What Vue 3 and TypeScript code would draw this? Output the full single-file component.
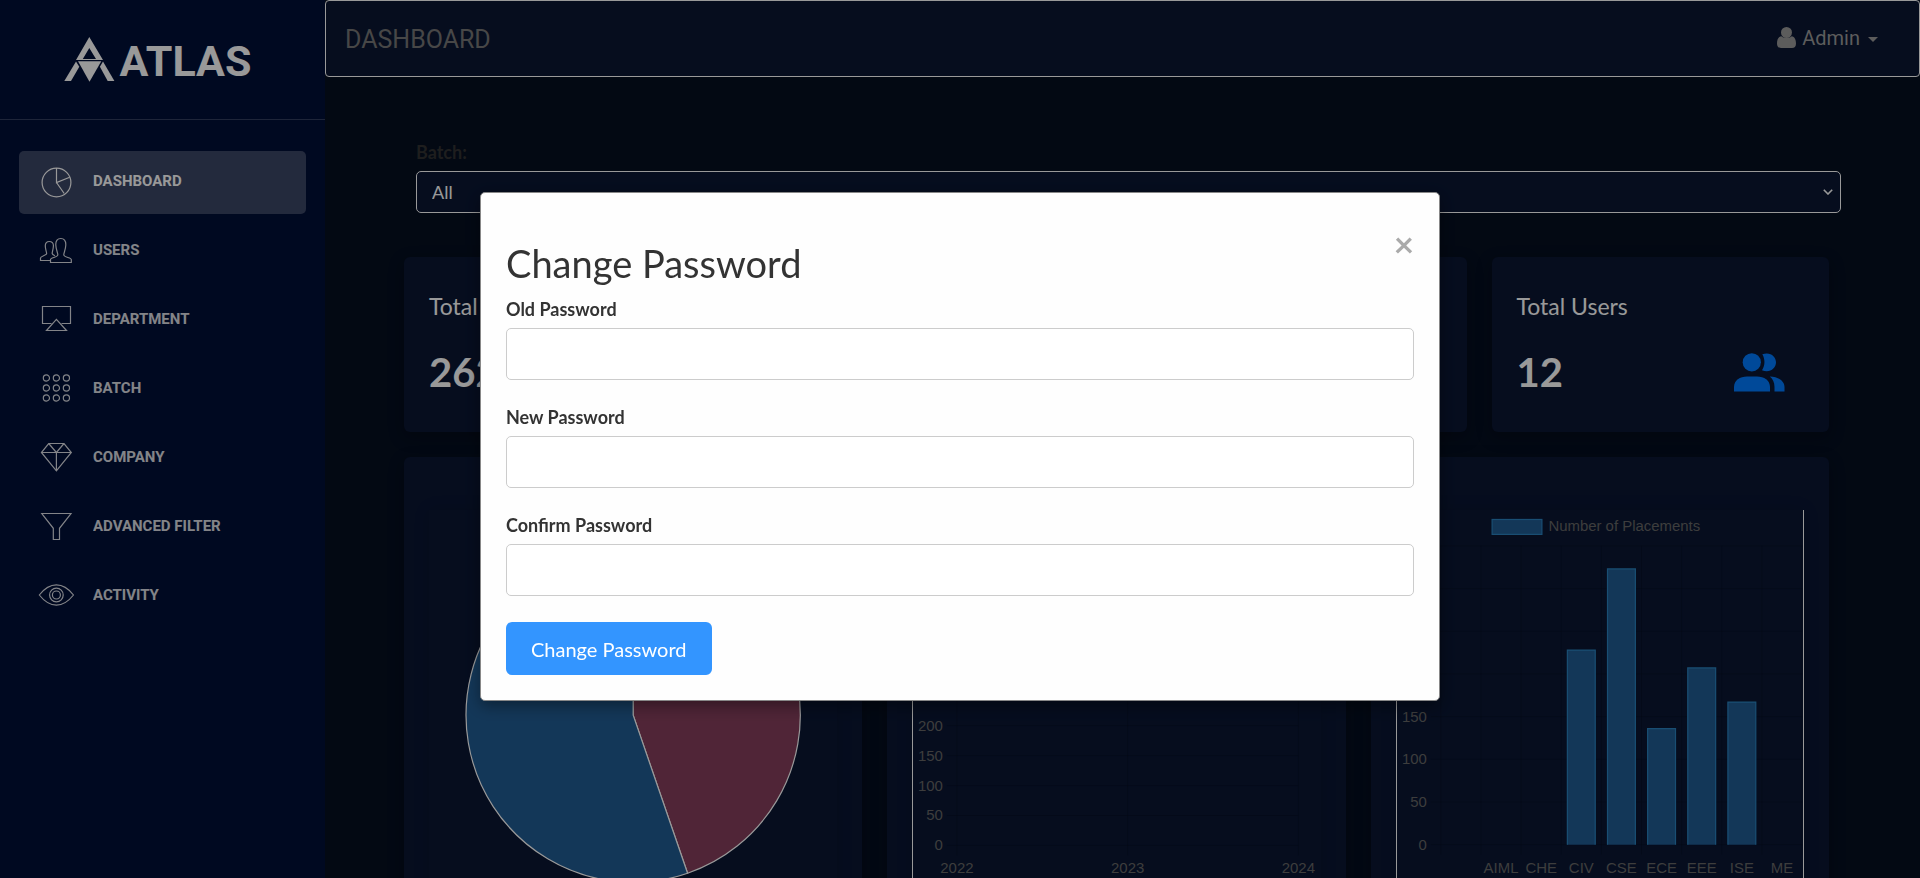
<script setup lang="ts">
import { ref } from 'vue'

interface NavItem {
  label: string
  paths: string[]
  active?: boolean
}

interface Stat {
  title: string
  value: number
}

const ring = (cx: number, cy: number, r: number): string =>
  `M${cx - r} ${cy}a${r} ${r} 0 1 0 ${2 * r} 0a${r} ${r} 0 1 0 ${-2 * r} 0z`

const navItems: NavItem[] = [
  {
    label: 'Dashboard',
    active: true,
    paths: [ring(18.5, 19.5, 14.4), 'M18.5 5V19.5L31.7 14.3M18.5 19.5L26.2 30.5'],
  },
  {
    label: 'Users',
    paths: [
      'M12.5 30.5V27.5C12.5 25.5 19.5 25.4 19.8 23C20 21 18 18 17.8 13C17.6 8.5 19.5 6.5 22.8 6.5C26 6.5 28 8.5 27.8 13C27.6 18 25.6 21 25.8 23C26.1 25.4 33.3 25.5 33.3 27.5V30.5Z',
      'M12.5 28.5H2.5V26C2.5 24 8 23.6 8.6 21.8C8.8 20 7.4 18 7.3 14C7.2 11 8.8 9.5 11.3 9.5C13.8 9.5 15.6 11 15.4 14C15.3 18 14 20 14.2 21.5C14.5 22.6 15.5 23.2 17 23.8',
    ],
  },
  {
    label: 'Department',
    paths: ['M13.5 22.5H4.5V5.5H32.5V22.5H23.5', 'M18.4 18.3L8.5 29.5H28.5Z'],
  },
  {
    label: 'Batch',
    paths: [8, 18, 28].flatMap((y) => [8.4, 18.4, 28.4].map((x) => ring(x, y, 3.1))),
  },
  {
    label: 'Company',
    paths: ['M10.7 4.5H26L33.3 13.5L18.4 31.8L3.4 13.5Z', 'M3.4 13.5H33.3M10.7 4.5L18.4 13.5L26 4.5M18.4 13.5V31.8'],
  },
  {
    label: 'Advanced Filter',
    paths: ['M3.8 5.5H33L21.5 20.3V31.5H15.3V20.3Z'],
  },
  {
    label: 'Activity',
    paths: [
      'M1.3 18C12 4.6 24.8 4.6 35.5 18C24.8 31.5 12 31.5 1.3 18Z',
      ring(18.4, 18, 6.8),
      ring(18.4, 18, 4),
    ],
  },
]

const stats: Stat[] = [
  { title: 'Total Students', value: 262 },
  { title: 'Total Placements', value: 262 },
  { title: 'Total Companies', value: 12 },
  { title: 'Total Users', value: 12 },
]

const batch = ref('All')
const open = ref(true)
const oldPassword = ref('')
const newPassword = ref('')
const confirmPassword = ref('')

const zeroY = 336

const lineTicks = [0, 50, 100, 150, 200, 250, 300, 350, 400, 450].map((value) => ({
  value,
  y: zeroY - (value / 50) * 30,
}))
const years = ['2022', '2023', '2024'].map((label, i) => ({ label, x: 44 + i * 171 }))

const barTicks = [0, 50, 100, 150, 200, 250, 300, 350].map((value) => ({
  value,
  y: zeroY - value * 0.857,
}))
const columnLeft = 44
const columnWidth = 40.3
const departments = [
  { label: '', value: 0 },
  { label: 'AIML', value: 0 },
  { label: 'CHE', value: 0 },
  { label: 'CIV', value: 228 },
  { label: 'CSE', value: 323 },
  { label: 'ECE', value: 136 },
  { label: 'EEE', value: 207 },
  { label: 'ISE', value: 167 },
  { label: 'ME', value: 0 },
].map((d, i) => ({
  ...d,
  line: columnLeft + (i + 1) * columnWidth,
  center: columnLeft + (i + 0.5) * columnWidth,
  top: zeroY - d.value * 0.857,
}))
const bars = departments.filter((d) => d.value > 0)

const pieX = 204
const pieY = 205
const pieR = 167
const split = (161 * Math.PI) / 180
const splitX = pieX + pieR * Math.sin(split)
const splitY = pieY - pieR * Math.cos(split)
const redSlice = `M${pieX} ${pieY}V${pieY - pieR}A${pieR} ${pieR} 0 0 1 ${splitX} ${splitY}Z`
const blueSlice = `M${pieX} ${pieY}L${splitX} ${splitY}A${pieR} ${pieR} 0 1 1 ${pieX} ${pieY - pieR}Z`
</script>

<template>
  <div class="app">
    <aside class="sidebar">
      <a href="#" class="logo">
        <svg class="logo-mark" viewBox="0 0 51 47" aria-hidden="true">
          <path fill-rule="evenodd" d="M25.3 1L39 24H12ZM25.3 12L18.8 23H32Z" />
          <path d="M14 25.2H37.3L25.5 45.8Z" />
          <path d="M12 25.4L15.3 30.8L7 45H0.3Z" />
          <path d="M39 25.4L35.9 30.8L43.7 45H50.4Z" />
        </svg>
        <span>ATLAS</span>
      </a>
      <nav>
        <ul class="nav">
          <li v-for="item in navItems" :key="item.label">
            <a href="#" class="nav-link" :class="{ active: item.active }">
              <svg viewBox="0 0 37 37" aria-hidden="true">
                <path v-for="d in item.paths" :key="d" :d="d" />
              </svg>
              <span>{{ item.label }}</span>
            </a>
          </li>
        </ul>
      </nav>
    </aside>

    <div class="main">
      <header class="topbar">
        <h1>DASHBOARD</h1>
        <button type="button" class="account">
          <svg class="account-icon" viewBox="0 0 19 21" aria-hidden="true">
            <circle cx="9.5" cy="5.5" r="5.5" />
            <path d="M4.4 9.3C6 11.5 13 11.5 14.6 9.3C17.8 9.8 19 12.8 19 16.5C19 19.5 17.6 21 15 21H4C1.4 21 0 19.5 0 16.5C0 12.8 1.2 9.8 4.4 9.3Z" />
          </svg>
          <span>Admin</span>
          <span class="caret"></span>
        </button>
      </header>

      <main class="content">
        <div class="filter">
          <label for="batch">Batch:</label>
          <div class="select">
            <select id="batch" v-model="batch">
              <option>All</option>
            </select>
            <svg viewBox="0 0 10 6" aria-hidden="true">
              <path d="M0.8 0.8L5 5L9.2 0.8" />
            </svg>
          </div>
        </div>

        <section class="stats">
          <article v-for="stat in stats" :key="stat.title" class="card stat">
            <h2>{{ stat.title }}</h2>
            <div class="stat-row">
              <strong>{{ stat.value }}</strong>
              <svg class="people" viewBox="0 0 51 39" aria-hidden="true">
                <circle cx="17.8" cy="9.3" r="9.1" />
                <path d="M0 38.5V34C0 27.5 6 23.5 13 23.5H23C30 23.5 36 27.5 36 34V38.5Z" />
                <path d="M28.3 1.3C36 -1.8 42 3.5 42 9.3C42 15.5 35.5 20.5 28 17.2C31.2 12.5 31.2 6 28.3 1.3Z" />
                <path d="M35.8 23.5C44 23.5 50.5 28 50.5 34V38.5H40.5V34C40.5 29.5 38.8 26 35.8 23.5Z" />
              </svg>
            </div>
          </article>
        </section>

        <section class="charts">
          <article class="card chart">
            <svg class="plot" viewBox="0 0 408 408" role="img" aria-label="Placement share">
              <path class="slice red" :d="redSlice" />
              <path class="slice blue" :d="blueSlice" />
            </svg>
          </article>

          <article class="card chart">
            <svg class="plot framed-left" viewBox="0 0 408 408" role="img" aria-label="Placements by year">
              <g v-for="tick in lineTicks" :key="tick.value">
                <line class="grid" x1="34" x2="386" :y1="tick.y" :y2="tick.y" />
                <text class="tick end" x="30" :y="tick.y + 5">{{ tick.value }}</text>
              </g>
              <g v-for="year in years" :key="year.label">
                <line class="grid" :x1="year.x" :x2="year.x" y1="36" y2="346" />
                <text class="tick middle" :x="year.x" y="364">{{ year.label }}</text>
              </g>
            </svg>
          </article>

          <article class="card chart">
            <svg class="plot framed-left framed-right" viewBox="0 0 408 408" role="img" aria-label="Placements by department">
              <rect class="bar" x="95.5" y="9.5" width="50" height="15" />
              <text class="tick" x="152" y="21">Number of Placements</text>
              <g v-for="tick in barTicks" :key="tick.value">
                <line class="grid" x1="34" x2="407" :y1="tick.y" :y2="tick.y" />
                <text class="tick end" x="30" :y="tick.y + 5">{{ tick.value }}</text>
              </g>
              <line class="grid" :x1="columnLeft" :x2="columnLeft" y1="36" y2="346" />
              <g v-for="dept in departments" :key="dept.label">
                <line class="grid" :x1="dept.line" :x2="dept.line" y1="36" y2="346" />
                <text class="tick middle" :x="dept.center" y="364">{{ dept.label }}</text>
              </g>
              <path
                v-for="dept in bars"
                :key="dept.label"
                class="bar"
                :d="`M${dept.center - 14} ${zeroY}V${dept.top}H${dept.center + 14}V${zeroY}`"
              />
            </svg>
          </article>
        </section>
      </main>
    </div>

    <div v-if="open" class="backdrop">
      <div class="modal" role="dialog" aria-modal="true" aria-labelledby="modal-title">
        <div class="modal-head">
          <h2 id="modal-title">Change Password</h2>
          <button type="button" class="close" aria-label="Close" @click="open = false">×</button>
        </div>
        <form @submit.prevent>
          <div class="field">
            <label for="old-password">Old Password</label>
            <input id="old-password" v-model="oldPassword" type="password" />
          </div>
          <div class="field">
            <label for="new-password">New Password</label>
            <input id="new-password" v-model="newPassword" type="password" />
          </div>
          <div class="field">
            <label for="confirm-password">Confirm Password</label>
            <input id="confirm-password" v-model="confirmPassword" type="password" />
          </div>
          <button type="submit" class="submit">Change Password</button>
        </form>
      </div>
    </div>
  </div>
</template>

<style>
body {
  background: #050f21;
}
</style>

<style scoped>
.app,
.app * {
  box-sizing: border-box;
}

.app {
  display: flex;
  height: 100vh;
  overflow: hidden;
  background: #050f21;
  font-family: Lato, sans-serif;
  color: #333;
}

h1,
h2,
ul {
  margin: 0;
  padding: 0;
  font-weight: 400;
}

button {
  border: 0;
  background: none;
  cursor: pointer;
}

/* Sidebar */
.sidebar {
  flex: 0 0 325px;
  background: #000f38;
  font-family: Roboto, sans-serif;
}

.logo {
  display: flex;
  align-items: center;
  justify-content: center;
  gap: 5px;
  height: 120px;
  padding-right: 10px;
  border-bottom: 1px solid rgba(255, 255, 255, 0.2);
  color: #fff;
  font-size: 43px;
  font-weight: 700;
  line-height: 48px;
  text-decoration: none;
}

.logo span {
  padding-top: 3px;
}

.logo-mark {
  width: 51px;
  height: 47px;
  fill: currentColor;
}

.nav {
  display: flex;
  flex-direction: column;
  gap: 6px;
  padding: 31px 19px;
  list-style: none;
}

.nav-link {
  display: flex;
  align-items: center;
  gap: 18px;
  height: 63px;
  padding: 0 19px 2px;
  border-radius: 5px;
  color: #fff;
  font-size: 15px;
  font-weight: 700;
  line-height: 37px;
  text-decoration: none;
  text-transform: uppercase;
}

.nav-link > * {
  opacity: 0.86;
}

.nav-link.active {
  background: rgba(255, 255, 255, 0.23);
}

.nav-link.active > * {
  opacity: 1;
}

.nav-link svg {
  width: 37px;
  height: 37px;
  fill: none;
  stroke: currentColor;
  stroke-width: 1.2;
}

/* Main column */
.main {
  flex: 1;
  min-width: 0;
  overflow: auto;
  scrollbar-width: none;
}

.topbar {
  display: flex;
  align-items: center;
  justify-content: space-between;
  height: 77px;
  padding: 0 41px 0 19px;
  border: 1px solid #fff;
  border-radius: 4px;
  background: #0a1633;
  font-family: Roboto, sans-serif;
}

.topbar h1 {
  padding-top: 2px;
  color: #777;
  font-size: 25px;
  line-height: 30px;
}

.account {
  display: flex;
  align-items: center;
  gap: 6px;
  padding: 0 0 2px;
  color: #9a9a9a;
  font-family: inherit;
  font-size: 20px;
  line-height: 30px;
}

.account-icon {
  width: 19px;
  height: 21px;
  fill: currentColor;
}

.caret {
  margin: 4px 0 0 2px;
  border: 5px solid transparent;
  border-top-color: currentColor;
  border-bottom: 0;
}

.content {
  padding: 62px 79px 40px 91px;
}

.filter {
  display: flex;
  flex-direction: column;
  gap: 6px;
  margin-bottom: 44px;
}

.filter label {
  font-size: 18px;
  font-weight: 700;
  line-height: 26px;
}

.select {
  display: grid;
  align-items: center;
}

.select > * {
  grid-area: 1 / 1;
}

.select select {
  width: 100%;
  height: 42px;
  padding: 0 15px;
  appearance: none;
  border: 1px solid #fff;
  border-radius: 5px;
  background: #0a1633;
  color: #fff;
  font-family: inherit;
  font-size: 18px;
}

.select svg {
  justify-self: end;
  width: 10px;
  height: 6px;
  margin-right: 8px;
  fill: none;
  stroke: #fff;
  stroke-width: 1.6;
  pointer-events: none;
}

.stats,
.charts {
  display: grid;
  grid-template-columns: repeat(4, 1fr);
  gap: 25px;
  margin: 0 12px 0 -12px;
}

.charts {
  grid-template-columns: repeat(3, 1fr);
  margin-top: 25px;
}

.card {
  border-radius: 6px;
  background: #0a1633;
  box-shadow: 0 5px 16px rgba(0, 0, 0, 0.25);
}

.stat {
  height: 175px;
  padding: 35px 44px 0 25px;
  color: #fff;
}

.stat h2 {
  font-size: 23px;
  line-height: 28px;
}

.stat-row {
  display: flex;
  align-items: center;
  justify-content: space-between;
  margin-top: 28px;
}

.stat strong {
  font-size: 40px;
  line-height: 48px;
}

.people {
  width: 51px;
  height: 39px;
  fill: #007bff;
}

.chart {
  padding: 53px 25px 25px;
}

.plot {
  display: block;
  width: 100%;
  box-shadow: 0 0 16px rgba(0, 0, 0, 0.1);
}

.framed-left {
  border-left: 1px solid #fff;
}

.framed-right {
  border-right: 1px solid #fff;
}

.slice {
  stroke: #fff;
  stroke-width: 1.2;
}

.red {
  fill: #853e5c;
}

.blue {
  fill: #215c93;
}

.bar {
  fill: #215c93;
  stroke: #2a83c0;
  stroke-width: 1.2;
}

.grid {
  stroke: rgba(0, 0, 0, 0.15);
}

.tick {
  fill: #666;
  font-family: "Liberation Sans", Arial, sans-serif;
  font-size: 15px;
}

.end {
  text-anchor: end;
}

.middle {
  text-anchor: middle;
}

/* Dialog */
.backdrop {
  position: fixed;
  inset: 0;
  padding-top: 192px;
  background: rgba(0, 0, 0, 0.4);
}

.modal {
  width: 50%;
  margin: 0 auto;
  padding: 25px;
  border: 1px solid #888;
  border-radius: 5px;
  background: #fefefe;
  box-shadow: 0 5px 16px rgba(0, 0, 0, 0.4);
}

.modal-head {
  display: flex;
  align-items: flex-start;
  justify-content: space-between;
  margin-bottom: 12px;
}

.modal-head h2 {
  margin-top: 24px;
  font-size: 38px;
  line-height: 42px;
}

.close {
  padding: 0;
  color: #aaa;
  font-family: inherit;
  font-size: 35px;
  font-weight: 700;
  line-height: 50px;
}

.field {
  display: flex;
  flex-direction: column;
  gap: 6px;
  margin-bottom: 24px;
}

.field label {
  font-size: 18px;
  font-weight: 700;
  line-height: 26px;
}

.field input {
  width: 100%;
  height: 52px;
  padding: 12px;
  border: 1px solid #ccc;
  border-radius: 5px;
  background: #fff;
  font-family: inherit;
  font-size: 18px;
}

.submit {
  display: block;
  height: 53px;
  margin-top: 26px;
  padding: 0 25px;
  border-radius: 6px;
  background: #3395ff;
  color: #fff;
  font-family: inherit;
  font-size: 20px;
}
</style>
